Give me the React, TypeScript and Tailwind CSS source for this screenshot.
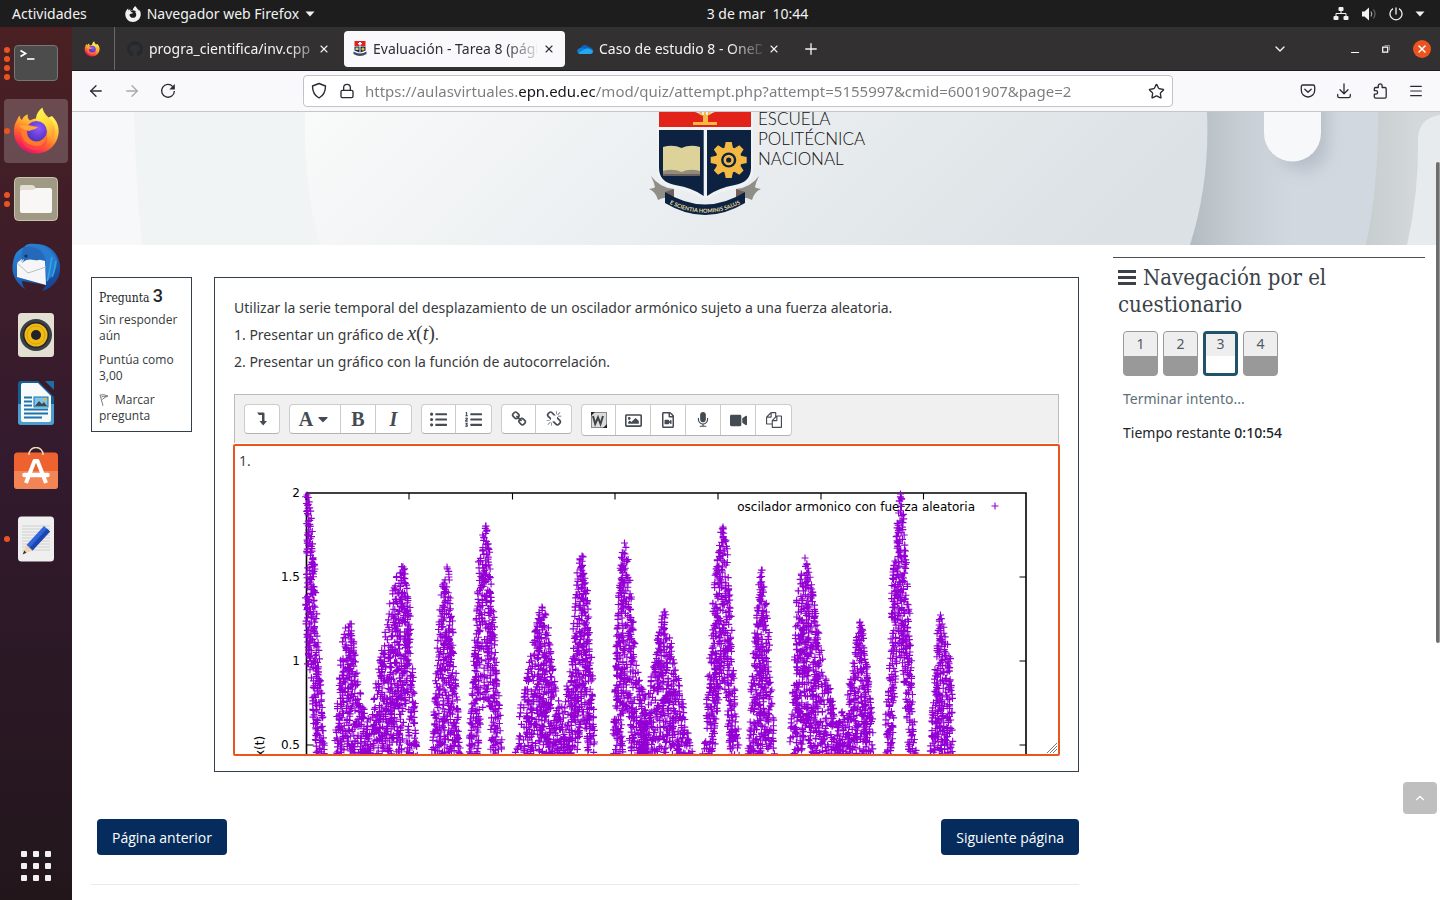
import React from "react";
import {
  ArrowLeft,
  ArrowRight,
  ChevronDown,
  ChevronUp,
  Lock,
  Menu,
  Plus,
  Star,
  X,
} from "lucide-react";
import { FaCaretDown, FaGithub, FaListOl, FaListUl, FaRegFileVideo, FaRegImage, FaVideo } from "react-icons/fa";
import { SiFirefoxbrowser } from "react-icons/si";

/* ---------- System icons ---------- */

function NetworkIcon() {
  return (
    <svg viewBox="0 0 16 14" className="h-3.5 w-4" fill="currentColor" aria-hidden="true">
      <rect x="5.500" y="0" width="5" height="4" rx="1" />
      <rect x="0.500" y="9" width="5" height="4" rx="1" />
      <rect x="10.500" y="9" width="5" height="4" rx="1" />
      <path d="M8 4v2.500M3 9V6.500h10V9" fill="none" stroke="currentColor" strokeWidth="1" />
    </svg>
  );
}

function VolumeIcon() {
  return (
    <svg viewBox="0 0 16 14" className="h-3.5 w-4" aria-hidden="true">
      <path d="M1 4.500h2.500L8 0.500v13L3.500 9.500H1z" fill="currentColor" />
      <path d="M10 4.500q1.500 2.500 0 5" fill="none" stroke="#aaa" strokeWidth="1.200" />
      <path d="M12.500 2.500q3 4.500 0 9" fill="none" stroke="#666" strokeWidth="1.200" />
    </svg>
  );
}

function PowerIcon() {
  return (
    <svg viewBox="0 0 14 14" className="size-3.5" fill="none" stroke="currentColor" strokeWidth="1.300" aria-hidden="true">
      <path d="M7 0.500v7M4 1.600a6 6 0 1 0 6 0" />
    </svg>
  );
}

function DownTriangle() {
  return (
    <svg viewBox="0 0 10 6" className="h-1.5 w-2.5" fill="currentColor" aria-hidden="true">
      <path d="M0.500 0.500h9L5 5.500z" />
    </svg>
  );
}

/* ---------- Application icons ---------- */

function FirefoxLogo({ className, id }: { className: string; id: string }) {
  return (
    <svg viewBox="0 0 48 48" className={className} aria-hidden="true">
      <defs>
        <linearGradient id={id + "body"} x1="0.85" y1="0.1" x2="0.3" y2="1">
          <stop offset="0" stopColor="#fff44f" />
          <stop offset="0.35" stopColor="#ffb02e" />
          <stop offset="0.6" stopColor="#ff6a2d" />
          <stop offset="0.85" stopColor="#f9284f" />
          <stop offset="1" stopColor="#d8147c" />
        </linearGradient>
        <linearGradient id={id + "flame"} x1="0.3" y1="0" x2="0.8" y2="1">
          <stop offset="0" stopColor="#fff44f" />
          <stop offset="0.6" stopColor="#ffd23a" />
          <stop offset="1" stopColor="#ff9640" />
        </linearGradient>
        <radialGradient id={id + "globe"} cx="0.6" cy="0.3" r="0.8">
          <stop offset="0" stopColor="#9059ff" />
          <stop offset="0.5" stopColor="#6b41d9" />
          <stop offset="1" stopColor="#4a2fae" />
        </radialGradient>
      </defs>
      <path
        d="M3 17C5 13 6 10.500 7.500 8.500C8 11 8.500 12 10 13C11 9.500 13.500 8 16 7.500C15 10 16 12.500 18.500 13.500C22 11 27 11 31 13L40 9C45 14 47.500 20 46.500 27C45 38 36 46.500 24.500 46.500C12 46.500 2 37 2 25C2 22 2.200 19 3 17Z"
        fill={`url(#${id}body)`}
      />
      <path
        d="M24 13C24 7 27 3 30.500 0.500C31 5 34 8 37 11C43 16 44.500 24 41 31C40 27 38 24 35 21C31 17 28 15 24 13Z"
        fill={`url(#${id}flame)`}
      />
      <circle cx="24.500" cy="24.500" r="10.500" fill={`url(#${id}globe)`} />
      <path
        d="M7 19C10 17 15 18 18 18.500L25 20C24 23 20 23 18 24C15 26 17 30 21 32C27 35 32 32 34 28C35 34 31 39 25 39C16 39 9 33 9 25C9 22 8 20 7 19Z"
        fill="#ff7a2c"
      />
      <path d="M9 25C9 33 16 39 25 39C31 39 35 34 34 28C37 34 34 43 24 43C12 43 8 33 9 25Z" fill="#ff4a45" opacity="0.700" />
      <circle cx="24.500" cy="25" r="9.500" fill={`url(#${id}globe)`} />
      <path d="M7 19C11 17 16 18 26 20C24 22.500 20 22.500 17.500 24C13 23 10 22 7 19Z" fill="#ffa436" />
    </svg>
  );
}

function TerminalIcon() {
  return (
    <svg viewBox="0 0 48 48" className="size-12" aria-hidden="true">
      <rect x="2.500" y="6.500" width="43" height="35" rx="3.500" fill="#4c4c4c" stroke="#777" />
      <path d="M8.500 11.500l5 3-5 3" fill="none" stroke="#fff" strokeWidth="1.800" />
      <path d="M15 20h7.500" stroke="#fff" strokeWidth="1.600" />
    </svg>
  );
}

function FilesIcon() {
  return (
    <svg viewBox="0 0 48 48" className="size-12" aria-hidden="true">
      <rect x="2.500" y="2.500" width="43" height="43" rx="4" fill="#a09a85" stroke="#c8c2b0" />
      <path d="M8 37V12q0-2 2-2h10q2 0 3 2l1.500 3H38v22z" fill="#e2ded3" />
      <path d="M8 16.500q0-1.500 2-1.500h11l3-2h14q2 0 2 2V36q0 2-2 2H10q-2 0-2-2z" fill="#f8f7f5" />
    </svg>
  );
}

function ThunderbirdIcon() {
  return (
    <svg viewBox="0 0 48 48" className="size-12" aria-hidden="true">
      <defs>
        <linearGradient id="tbird" x1="0.2" y1="0" x2="0.8" y2="1">
          <stop offset="0" stopColor="#2b86d6" />
          <stop offset="0.5" stopColor="#1f66bd" />
          <stop offset="1" stopColor="#173f8c" />
        </linearGradient>
      </defs>
      <path d="M3 12C1 17-1 26 2 33C4 38 8 43 13 46C11 43 10 40 10 38L34 42L30 48C42 45 49 34 48 23C47 10 37 1 24 1C16 0 14 2 12 4C8 6 5 8 3 12Z" fill="url(#tbird)" />
      <path d="M5 20L13 13L33 18L34 42L5 34Z" fill="#f6f6f8" />
      <path d="M5 20L16 30L34 24" fill="none" stroke="#b9bcc4" strokeWidth="1" />
      <path d="M19 1C26 3 31 8 33 14C35 21 33 30 35 38C41 33 45 26 45 17C40 7 30 0 19 1Z" fill="#2a7cd0" />
      <path d="M12 4C18 2 27 5 30 11C31 16 27 18 22 17C18 16 14 16 10 20C9 13 10 8 12 4Z" fill="#2569b8" />
      <path d="M35 38C38 30 38 22 40 14M40 34C43 28 43 22 44 18" stroke="#35a5e2" strokeWidth="1.500" fill="none" />
      <circle cx="14" cy="13" r="1.600" fill="#16305f" />
      <path d="M8 18l4-2-1 4z" fill="#c9cfd8" />
    </svg>
  );
}

function MusicIcon() {
  return (
    <svg viewBox="0 0 48 48" className="size-12" aria-hidden="true">
      <rect x="6" y="2" width="36" height="44" rx="3.500" fill="#e3dfd3" />
      <circle cx="24" cy="24" r="16" fill="#3b4047" />
      <circle cx="24" cy="24" r="13" fill="#22262b" />
      <circle cx="24" cy="24" r="11.500" fill="#f0b915" />
      <circle cx="24" cy="24" r="9" fill="none" stroke="#d29c08" strokeWidth="0.800" />
      <circle cx="24" cy="24" r="5" fill="#202327" />
    </svg>
  );
}

function WriterIcon() {
  return (
    <svg viewBox="0 0 48 48" className="size-12" aria-hidden="true">
      <path d="M9 2h17l16 16v25q0 3-3 3H9q-3 0-3-3V5q0-3 3-3z" fill="#15608f" />
      <path d="M6 25h36v18q0 3-3 3H9q-3 0-3-3z" fill="#4a9fce" />
      <path d="M33 2h9v9z" fill="#1b6fa2" />
      <path d="M11 4h15l13 13v24q0 2-2 2H11q-2 0-2-2V6q0-2 2-2z" fill="#f7f9fa" />
      <path d="M12 18.500h8M12 22.500h8M12 26.500h8M12 30.500h24M12 34.500h24M12 38.500h18" stroke="#1b75ab" strokeWidth="2" />
      <rect x="22" y="18" width="14" height="10" fill="#7cc4ea" stroke="#1b75ab" />
      <path d="M23 27l4-5 3 3 2-2 3 4z" fill="#3b4a52" />
      <circle cx="33" cy="20.500" r="1.500" fill="#f3b61f" />
    </svg>
  );
}

function SoftwareIcon() {
  return (
    <svg viewBox="0 0 48 48" className="size-12" aria-hidden="true">
      <rect x="2" y="5.500" width="44" height="36.500" rx="3.500" fill="#ee6230" />
      <path d="M2 24h44v14.500q0 3.500-3.500 3.500h-37Q2 42 2 38.500z" fill="#f28455" />
      <path d="M17 8V7.500a7 7 0 0 1 14 0V8" fill="none" stroke="#f6dcb6" strokeWidth="1.500" />
      <path d="M14 36L22.500 14h3L34 36" fill="none" stroke="#fff" strokeWidth="4" strokeLinejoin="round" />
      <path d="M12.500 28h23" stroke="#fff" strokeWidth="4.500" strokeLinecap="round" />
    </svg>
  );
}

function EditorIcon() {
  return (
    <svg viewBox="0 0 48 48" className="size-12" aria-hidden="true">
      <rect x="6" y="1.500" width="36" height="45" rx="3.500" fill="#efefef" />
      <path d="M10 11h28M10 14h28M10 17h28M10 20h28M10 23h28M10 26h28M10 29h28M10 32h28M10 35h28" stroke="#cfcfcf" strokeWidth="1" />
      <path d="M32 11l6 5.500L20.500 35.500l-6-5.500z" fill="#2f66dd" />
      <path d="M35 13.700l3 2.800L20.500 35.500l-3-2.800z" fill="#1c46ad" />
      <path d="M14.500 30l6 5.500-9.500 3.500z" fill="#f2d3a8" />
      <path d="M12.200 35.500l2.300 2.200-3.800 1.800z" fill="#333" />
    </svg>
  );
}

function OneDriveIcon() {
  return (
    <svg viewBox="0 0 16 12" className="h-3 w-4 shrink-0" aria-hidden="true">
      <path d="M3.500 5A5 5 0 0 1 12 4q4 .5 4 4l-8 2z" fill="#0a63bd" />
      <path d="M3 5q3-1 6 1.500l-6 4.500Q0 10 0 8t3-3z" fill="#0f7ad6" />
      <path d="M1 10L8 6q4-2 8 2 0 3-3 3H3q-1 0-2-1z" fill="#22a7f0" />
    </svg>
  );
}

function EpnFavicon() {
  return (
    <svg viewBox="0 0 14 16" className="h-4 w-3.5 shrink-0" aria-hidden="true">
      <path d="M1.500 0h11v5h-11z" fill="#dd2222" />
      <path d="M6.200 1h1.600v3.500H6.200zM5 2h4v1.200H5z" fill="#fff" />
      <path d="M1.500 5.500h5v6l-5-2zM7.500 5.500h5v4l-5 2z" fill="#10264a" />
      <path d="M2.500 6.500h3v2.500h-3z" fill="#d8cf8d" />
      <circle cx="10" cy="8" r="1.600" fill="#efb33c" />
      <path d="M0.500 10.500q6.500 4 13 0v2.500q-6.500 4-13 0z" fill="#3e4a5d" />
    </svg>
  );
}

/* ---------- Dock ---------- */

type DockItem = { name: string; icon: React.ReactNode; windows: number; active?: boolean };

const dockItems: DockItem[] = [
  { name: "Terminal", icon: <TerminalIcon />, windows: 4 },
  { name: "Firefox", icon: <FirefoxLogo className="size-12" id="dock" />, windows: 1, active: true },
  { name: "Archivos", icon: <FilesIcon />, windows: 2 },
  { name: "Thunderbird", icon: <ThunderbirdIcon />, windows: 0 },
  { name: "Rhythmbox", icon: <MusicIcon />, windows: 0 },
  { name: "LibreOffice Writer", icon: <WriterIcon />, windows: 0 },
  { name: "Ubuntu Software", icon: <SoftwareIcon />, windows: 0 },
  { name: "Editor de texto", icon: <EditorIcon />, windows: 1 },
];

function Dock() {
  return (
    <nav
      aria-label="Aplicaciones"
      className="flex w-[72px] shrink-0 flex-col items-center justify-between bg-gradient-to-b from-[#4a2022] via-[#331a2e] to-[#22161b] pt-1 pb-0.5"
    >
      <div className="flex flex-col gap-1">
        {dockItems.map((item) => (
          <button
            key={item.name}
            type="button"
            aria-label={item.name}
            className={
              item.active
                ? "relative flex size-16 items-center justify-center rounded bg-white/20"
                : "relative flex size-16 items-center justify-center rounded"
            }
          >
            {item.icon}
            <span className="absolute inset-y-0 left-0 flex flex-col justify-center gap-[3px]">
              {Array.from({ length: item.windows }, (_, i) => (
                <span key={i} className="size-1.5 rounded-full bg-[#e95420]" />
              ))}
            </span>
          </button>
        ))}
      </div>
      <button type="button" aria-label="Mostrar aplicaciones" className="flex size-16 items-center justify-center">
        <span className="grid grid-cols-3 gap-1.5">
          {Array.from({ length: 9 }, (_, i) => (
            <span key={i} className="size-1.5 rounded-[1px] bg-[#f2f1f0]" />
          ))}
        </span>
      </button>
    </nav>
  );
}

/* ---------- Browser chrome ---------- */

function TopBar() {
  return (
    <header className="grid h-[27px] shrink-0 grid-cols-[1fr_auto_1fr] items-center bg-[#1d1d1d] text-sm text-[#f2f2f2]">
      <div className="flex items-center gap-[38px] pl-3">
        <button type="button">Actividades</button>
        <button type="button" className="flex items-center gap-1.5">
          <SiFirefoxbrowser className="size-4" aria-hidden="true" />
          <span>Navegador web Firefox</span>
          <DownTriangle />
        </button>
      </div>
      <button type="button" className="pl-[75px] whitespace-pre">{"3 de mar  10:44"}</button>
      <div className="flex items-center justify-end gap-3 pr-[15px]">
        <NetworkIcon />
        <VolumeIcon />
        <PowerIcon />
        <DownTriangle />
      </div>
    </header>
  );
}

function TabTitle({ children, fade }: { children: React.ReactNode; fade?: boolean }) {
  return (
    <span
      className={
        fade
          ? "min-w-0 flex-1 text-left whitespace-nowrap [mask-image:linear-gradient(to_right,black_calc(100%-32px),rgb(0_0_0/0.15))]"
          : "min-w-0 flex-1 text-left whitespace-nowrap [mask-image:linear-gradient(to_right,black_calc(100%-24px),rgb(0_0_0/0.4))]"
      }
    >
      {children}
    </span>
  );
}

function TabBar() {
  return (
    <div className="flex h-11 shrink-0 items-center border-b border-[#1c1b22] bg-[#323031] text-sm text-[#f4f4f4]">
      <div className="flex h-full w-[43px] shrink-0 items-center justify-center border-r border-[#6a696a] pr-0.5">
        <FirefoxLogo className="size-4" id="pinned" />
      </div>
      <div className="ml-3 flex w-[203px] items-center gap-1.5">
        <FaGithub className="size-4 shrink-0 text-[#24292e]" aria-hidden="true" />
        <TabTitle>progra_cientifica/inv.cpp</TabTitle>
        <button type="button" aria-label="Cerrar pestaña"><X className="size-3" strokeWidth={2.2} /></button>
      </div>
      <div className="ml-3.5 flex h-9 w-[221px] items-center gap-1.5 rounded bg-[#f9f9fb] pr-2.5 pl-[9px] text-[#2e2e36]">
        <EpnFavicon />
        <TabTitle fade>Evaluación - Tarea 8 (pági</TabTitle>
        <button type="button" aria-label="Cerrar pestaña"><X className="size-3" strokeWidth={2.2} /></button>
      </div>
      <div className="ml-3 flex w-[203px] items-center gap-1.5">
        <OneDriveIcon />
        <TabTitle fade>Caso de estudio 8 - OneD</TabTitle>
        <button type="button" aria-label="Cerrar pestaña"><X className="size-3" strokeWidth={2.2} /></button>
      </div>
      <button type="button" aria-label="Nueva pestaña" className="ml-[22px]">
        <Plus className="size-[18px]" strokeWidth={1.8} />
      </button>
      <div className="ml-auto flex items-center pr-[9px]">
        <button type="button" aria-label="Listar pestañas" className="mr-[63px]">
          <ChevronDown className="size-4" strokeWidth={2} />
        </button>
        <div className="flex items-center gap-[23px]">
          <button type="button" aria-label="Minimizar" className="flex size-2 items-end">
            <span className="h-px w-2 bg-white" />
          </button>
          <button type="button" aria-label="Restaurar">
            <svg viewBox="0 0 8 8" className="size-2" fill="none" aria-hidden="true">
              <path d="M0.700 2.200h5v5h-5z" stroke="#fff" strokeWidth="1.200" />
              <path d="M2.500 0.500h5v5" stroke="#aaa" strokeWidth="0.800" />
            </svg>
          </button>
          <button type="button" aria-label="Cerrar" className="flex size-[18px] items-center justify-center rounded-full bg-[#e95420] text-white">
            <X className="size-3" strokeWidth={3} />
          </button>
        </div>
      </div>
    </div>
  );
}

function ReloadIcon() {
  return (
    <svg viewBox="0 0 16 16" className="size-4" fill="none" stroke="currentColor" strokeWidth="1.300" aria-hidden="true">
      <path d="M12.800 3.600A6.400 6.400 0 1 0 14.400 8" />
      <path d="M14.800 1v5.500H9.300z" fill="currentColor" stroke="none" />
    </svg>
  );
}

function ShieldIcon() {
  return (
    <svg viewBox="0 0 16 18" className="h-[18px] w-4 shrink-0" fill="none" stroke="currentColor" strokeWidth="1.400" strokeLinejoin="round" aria-hidden="true">
      <path d="M8 1.500L1.500 4q0 8.500 6.500 12 6.500-3.500 6.500-12z" />
    </svg>
  );
}

function PocketIcon() {
  return (
    <svg viewBox="0 0 16 16" className="size-4" fill="none" stroke="currentColor" strokeWidth="1.300" strokeLinecap="round" strokeLinejoin="round" aria-hidden="true">
      <path d="M3 2h10q1.700 0 1.700 1.700V7.300a6.700 6.700 0 0 1-13.400 0V3.700Q1.300 2 3 2z" />
      <path d="M4.800 6.300L8 9.300l3.200-3" />
    </svg>
  );
}

function DownloadIcon() {
  return (
    <svg viewBox="0 0 16 16" className="size-4" fill="none" stroke="currentColor" strokeWidth="1.300" strokeLinecap="round" strokeLinejoin="round" aria-hidden="true">
      <path d="M8 1v9.500M4 6.800L8 10.700l4-3.900M1.700 11.500V13q0 1.700 1.700 1.700h9.200q1.700 0 1.700-1.700v-1.500" />
    </svg>
  );
}

function PuzzleIcon() {
  return (
    <svg viewBox="0 0 16 16" className="size-4" fill="none" stroke="currentColor" strokeWidth="1.300" strokeLinejoin="round" aria-hidden="true">
      <path d="M6.300 4.500V2.800a1.900 1.900 0 0 1 3.800 0v1.700h2.700q1.400 0 1.400 1.400v7.800q0 1.400-1.400 1.400H3.700q-1.400 0-1.400-1.400v-2.500h1.500a1.800 1.800 0 0 0 0-3.600H2.300V5.900q0-1.400 1.400-1.400z" />
    </svg>
  );
}

function NavBar() {
  return (
    <div className="flex h-[41px] shrink-0 items-center border-b border-[#c6c6c6] bg-[#f9f9fb] pr-4 text-[#2b2a33]">
      <div className="flex items-center gap-[18px] pl-[15px]">
        <button type="button" aria-label="Atrás"><ArrowLeft className="size-[18px]" strokeWidth={1.7} /></button>
        <button type="button" aria-label="Adelante" className="text-[#a9a9ad]"><ArrowRight className="size-[18px]" strokeWidth={1.7} /></button>
        <button type="button" aria-label="Recargar" className="flex w-[18px] justify-center"><ReloadIcon /></button>
      </div>
      <div className="mr-auto ml-[126px] flex h-8 w-[870px] items-center rounded border border-[#c3c3c7] bg-white px-[7px]">
        <ShieldIcon />
        <Lock className="ml-3 size-4 shrink-0" strokeWidth={2} aria-hidden="true" />
        <input
          aria-label="Dirección"
          type="text"
          defaultValue="https://aulasvirtuales.epn.edu.ec/mod/quiz/attempt.php?attempt=5155997&cmid=6001907&page=2"
          className="ml-2.5 min-w-0 flex-1 bg-[linear-gradient(to_right,#7b7b80_154px,#15141a_154px,#15141a_231px,#7b7b80_231px)] bg-clip-text text-[15px] text-transparent caret-black outline-none"
        />
        <button type="button" aria-label="Añadir a marcadores"><Star className="size-[17px]" strokeWidth={1.9} /></button>
      </div>
      <div className="flex items-center gap-5">
        <button type="button" aria-label="Guardar en Pocket"><PocketIcon /></button>
        <button type="button" aria-label="Descargas"><DownloadIcon /></button>
        <button type="button" aria-label="Extensiones"><PuzzleIcon /></button>
        <button type="button" aria-label="Menú"><Menu className="size-4" strokeWidth={1.8} /></button>
      </div>
    </div>
  );
}

/* ---------- Banner ---------- */

function BannerArt() {
  return (
    <svg viewBox="0 0 1368 133" preserveAspectRatio="xMaxYMin slice" className="absolute inset-0 size-full" aria-hidden="true">
      <defs>
        <linearGradient id="bgdisc" x1="0" y1="0" x2="1" y2="0.15">
          <stop offset="0" stopColor="#f9fafa" />
          <stop offset="0.5" stopColor="#eaeef0" />
          <stop offset="1" stopColor="#dbe1e5" />
        </linearGradient>
        <linearGradient id="bgshade" gradientUnits="userSpaceOnUse" x1="1110" y1="0" x2="1220" y2="0">
          <stop offset="0" stopColor="#b0b8bf" />
          <stop offset="0.5" stopColor="#c6cdd2" />
          <stop offset="1" stopColor="#d2d8e0" />
        </linearGradient>
        <linearGradient id="bgshade2" gradientUnits="userSpaceOnUse" x1="1295" y1="0" x2="1345" y2="0">
          <stop offset="0" stopColor="#c8cdd0" />
          <stop offset="1" stopColor="#d3d8da" />
        </linearGradient>
        <filter id="soft" x="-50%" y="-50%" width="200%" height="200%">
          <feGaussianBlur stdDeviation="8" />
        </filter>
      </defs>
      <rect width="1368" height="133" fill="#f3f5f6" />
      <path d="M62 0Q64 70 70 133H0V0z" fill="#f6f8f9" />
      <path d="M233 0Q231 70 248 133H70Q64 70 62 0z" fill="#f1f4f5" />
      <rect x="1080" width="288" height="133" fill="url(#bgshade)" />
      <path d="M1306 0Q1307 70 1294 133H1368V0z" fill="url(#bgshade2)" />
      <path d="M1368 3Q1346 6 1346 28Q1347 80 1335 133H1368z" fill="#e7ebed" />
      <path d="M233 0Q231 70 248 133H1118Q1138 70 1135 0z" fill="url(#bgdisc)" />
      <path d="M1200-20h50v48a25 25 0 0 1-50 0z" fill="#8e99a4" opacity="0.400" filter="url(#soft)" transform="translate(6 6)" />
      <path d="M1192-20h57v41a28.500 28.500 0 0 1-57 0z" fill="#f6f8f9" />
    </svg>
  );
}

function Crest() {
  const teeth = [0, 45, 90, 135, 180, 225, 270, 315];
  return (
    <svg viewBox="0 0 114 104" className="h-[104px] w-[114px] shrink-0" role="img" aria-label="Escudo de la Escuela Politécnica Nacional">
      <path d="M9 0H105V60Q105 70 90 76Q70 80 57.300 88Q45 80 25 76Q9 70 9 60z" fill="#f0f3f4" />
      <rect x="11" width="92" height="15" fill="#e2231a" />
      <path d="M45 10h24v3H45zM55 3h5v8h-5zM49 0h16q-3 4-8 4t-8-4z" fill="#f4b942" />
      <path d="M47 0h4l2 2zM67 0h-4l-2 2zM54 0h2v3h-2zM58 0h2v3h-2z" fill="#e3ecf2" />
      <path d="M11 18H55.700V84Q45 76 27 73Q11 70 11 56z" fill="#0d2240" />
      <path d="M103 18H59V84Q70 76 87 73Q103 70 103 56z" fill="#0d2240" />
      <path d="M15 35Q25 32 33.500 36Q42 32 52 35V60Q42 57 33.500 61Q25 57 15 60z" fill="#ddd39a" />
      <path d="M15 59Q25 56 33.500 60Q42 56 52 59V63H15z" fill="#8f8c80" />
      <path d="M15 62h37v2H15z" fill="#6f615b" />
      <g transform="translate(80.700 48)" fill="#f4b942">
        {teeth.map((angle) => (
          <path key={angle} d="M-3-18h6l1.500 7h-9z" transform={`rotate(${angle})`} />
        ))}
        <circle r="13" />
        <circle r="7.600" fill="#0d2240" />
        <circle r="5.200" />
        <circle r="2.600" fill="#0d2240" />
      </g>
      <path d="M3 64Q12 76 26 77V87Q17 84 10 88Q8 80 1 77Q7 76 7 75Q6 70 3 64z" fill="#8f8f88" />
      <path d="M111 64Q102 76 88 77V87Q97 84 104 88Q106 80 113 77Q107 76 107 75Q108 70 111 64z" fill="#8f8f88" />
      <path d="M17 80l9-3v9zM97 80l-9-3v9z" fill="#6f5f5b" />
      <path d="M17 80Q57 105 97 80V91Q57 115 17 91z" fill="#0d2240" />
      <path id="motto" d="M19 90.500Q57 111 95 90.500" fill="none" />
      <text fill="#e6dca0" fontSize="5.6" fontWeight="700" fontFamily="Lato, sans-serif">
        <textPath href="#motto" startOffset="50%" textAnchor="middle">E SCIENTIA HOMINIS SALUS</textPath>
      </text>
    </svg>
  );
}

function Banner() {
  return (
    <div className="relative h-[133px] shrink-0 overflow-hidden">
      <BannerArt />
      <div className="relative flex items-start justify-center pl-[144px] text-[#0f0c0d]">
        <Crest />
        <p className="-mt-[3px] -ml-1 w-[250px] font-[Lato] text-[17px] leading-5 font-light">
          ESCUELA
          <br />
          POLITÉCNICA
          <br />
          NACIONAL
        </p>
      </div>
    </div>
  );
}

/* ---------- Chart ---------- */

type Lobe = { outer: number[][]; hole?: number[][] };

// Each row is [y, left, right] in the coordinates of the chart.
const lobes: Lobe[] = [
  { outer: [[495, 306, 308], [515, 306, 311], [547, 307, 313], [577, 306, 315], [610, 306, 317], [660, 307, 319], [672, 308, 319], [687, 312, 321], [713, 313, 322], [756, 316, 325]] },
  { outer: [[624, 349, 351], [630, 344, 352], [645, 342, 354], [660, 341, 356], [680, 339, 358], [700, 338, 361], [720, 337, 367], [756, 334, 368]] },
  { outer: [[567, 402, 404], [575, 397, 405], [590, 393, 407], [610, 389, 410], [640, 384, 411], [660, 380, 412], [680, 377, 413], [705, 372, 415], [720, 368, 416], [756, 364, 418]], hole: [[703, 405, 406], [715, 404, 408], [756, 402, 406]] },
  { outer: [[567, 446, 448], [580, 444, 449], [596, 441, 450], [617, 440, 452], [640, 438, 453], [660, 436, 455], [700, 435, 457], [730, 433, 459], [756, 432, 461]] },
  { outer: [[526, 485, 487], [540, 482, 488], [560, 479, 490], [590, 478, 491], [620, 476, 494], [650, 474, 495], [680, 473, 497], [700, 472, 499], [730, 470, 501], [756, 469, 502]], hole: [[700, 484, 487], [720, 481, 490], [756, 479, 491]] },
  { outer: [[607, 541, 543], [620, 537, 547], [640, 533, 550], [660, 530, 552], [690, 525, 557], [705, 521, 562], [756, 515, 566]] },
  { outer: [[556, 581, 583], [565, 578, 584], [590, 576, 587], [610, 575, 588], [640, 573, 590], [670, 570, 592], [700, 565, 593], [756, 562, 595]], hole: [[722, 582, 584], [740, 579, 586], [756, 577, 587]] },
  { outer: [[543, 624, 625], [560, 621, 628], [590, 619, 631], [620, 618, 633], [650, 616, 636], [680, 616, 639], [695, 615, 645], [756, 612, 648]], hole: [[708, 625, 627], [725, 623, 629], [756, 623, 630]] },
  { outer: [[612, 663, 665], [630, 659, 669], [650, 656, 672], [670, 653, 677], [690, 649, 680], [705, 646, 683], [720, 642, 686], [756, 636, 694]] },
  { outer: [[527, 722, 724], [550, 718, 727], [580, 715, 728], [600, 713, 730], [640, 712, 732], [665, 709, 733], [690, 707, 735], [710, 705, 737], [730, 703, 738], [756, 701, 740]], hole: [[685, 722, 724], [700, 719, 725], [730, 717, 728], [756, 716, 730]] },
  { outer: [[570, 761, 762], [585, 759, 764], [610, 756, 767], [630, 755, 769], [660, 752, 770], [700, 751, 772], [730, 750, 774], [756, 748, 775]] },
  { outer: [[558, 804, 806], [575, 801, 810], [600, 797, 814], [625, 796, 817], [640, 795, 820], [670, 795, 824], [690, 793, 830], [710, 791, 834], [720, 791, 840], [756, 790, 840]], hole: [[728, 805, 807], [756, 801, 810]] },
  { outer: [[622, 859, 861], [635, 857, 865], [655, 853, 866], [680, 850, 868], [700, 846, 870], [715, 839, 872], [756, 838, 873]] },
  { outer: [[494, 900, 901], [515, 898, 904], [545, 896, 905], [580, 892, 907], [620, 892, 910], [645, 891, 910], [670, 889, 912], [700, 887, 913], [756, 884, 916]], hole: [[658, 899, 901], [670, 896, 903], [700, 895, 905], [756, 892, 908]] },
  { outer: [[615, 940, 941], [630, 938, 945], [645, 936, 948], [665, 935, 951], [690, 934, 952], [720, 932, 953], [756, 930, 953]] },
];

function seeded(seed: number) {
  let state = seed;
  return () => {
    state = (state * 1664525 + 1013904223) % 4294967296;
    return state / 4294967296;
  };
}

function spanAt(rows: number[][], y: number): [number, number] | null {
  for (let i = 1; i < rows.length; i++) {
    const a = rows[i - 1];
    const b = rows[i];
    if (y >= a[0] && y <= b[0]) {
      const t = (y - a[0]) / (b[0] - a[0]);
      return [a[1] + (b[1] - a[1]) * t, a[2] + (b[2] - a[2]) * t];
    }
  }
  return null;
}

function buildMarkers() {
  const random = seeded(20230303);
  const parts: string[] = [];
  const add = (x: number, y: number) => parts.push(`M${(x - 3.5).toFixed(1)} ${y.toFixed(1)}h7m-3.500-3.500v7`);
  for (const lobe of lobes) {
    const [top, topLeft, topRight] = lobe.outer[0];
    add((topLeft + topRight) / 2, top);
    for (let y = top; y < 756; y += 1) {
      const span = spanAt(lobe.outer, y);
      if (!span) continue;
      const left = span[0] - 0.5;
      const width = span[1] - span[0] + 1;
      const hole = lobe.hole ? spanAt(lobe.hole, y) : null;
      const count = Math.floor(width / 11 + 0.15 + random());
      for (let k = 0; k < count; k++) {
        const x = left + width * random();
        if (hole && x > hole[0] && x < hole[1]) continue;
        add(x, y + random() * 2 - 0.5);
      }
    }
  }
  return parts.join("");
}

const markers = buildMarkers();

function OscillatorChart() {
  return (
    <svg viewBox="239 477 820 280" className="block h-[280px] w-[820px] max-w-none" role="img" aria-label="Serie temporal x(t)">
      <path d="M306.500 760V493H1026V760" fill="none" stroke="#000" strokeWidth="1.600" />
      <path
        d="M409 493v6.500M512.500 493v6.500M615 493v6.500M718 493v6.500M821 493v6.500M923.500 493v6.500M307 577h6.500M307 661h6.500M307 745h6.500M1026 577h-6.500M1026 661h-6.500M1026 745h-6.500"
        stroke="#000"
        strokeWidth="1.100"
      />
      <g fontFamily="DejaVu Sans, sans-serif" fontSize="12" fill="#000">
        <text x="300" y="497" textAnchor="end">2</text>
        <text x="300" y="581" textAnchor="end">1.5</text>
        <text x="300" y="665" textAnchor="end">1</text>
        <text x="300" y="749" textAnchor="end">0.5</text>
        <text x="975" y="511" textAnchor="end">oscilador armonico con fuerza aleatoria</text>
        <text transform="translate(264 757) rotate(-90)">x(t)</text>
      </g>
      <path d={markers} stroke="#9400d3" strokeWidth="1.150" fill="none" />
      <path d="M991.500 506h7m-3.500-3.500v7" stroke="#9400d3" strokeWidth="1.100" />
    </svg>
  );
}

/* ---------- Rich text editor ---------- */

function Glyph({ d, viewBox = "0 0 1792 1792" }: { d: string; viewBox?: string }) {
  return (
    <svg viewBox={viewBox} className="h-4 w-4" fill="currentColor" aria-hidden="true">
      <path d={d} />
    </svg>
  );
}

const linkPath =
  "M1520 1216q0-40-28-68l-208-208q-28-28-68-28-42 0-72 32 3 3 19 18.500t21.500 21.500 15 19 13 25.500 3.500 27.500q0 40-28 68t-68 28q-15 0-27.500-3.500t-25.500-13-19-15-21.500-21.500-18.500-19q-33 31-33 73 0 40 28 68l206 207q27 27 68 27 40 0 68-26l147-146q28-28 28-67zm-703-705q0-40-28-68l-206-207q-28-28-68-28-39 0-68 27l-147 146q-28 28-28 67 0 40 28 68l208 208q27 27 68 27 42 0 72-31-3-3-19-18.500t-21.500-21.500-15-19-13-25.500-3.500-27.500q0-40 28-68t68-28q15 0 27.500 3.500t25.500 13 19 15 21.500 21.500 18.500 19q33-31 33-73zm895 705q0 120-85 203l-147 146q-83 83-203 83-121 0-204-85l-206-207q-83-83-83-203 0-123 88-209l-88-88q-86 88-208 88-120 0-204-84l-208-208q-84-84-84-204t85-203l147-146q83-83 203-83 121 0 204 85l206 207q83 83 83 203 0 123-88 209l88 88q86-88 208-88 120 0 204 84l208 208q84 84 84 204z";
const unlinkPath =
  "M503 1271l-256 256q-10 9-23 9-12 0-23-9-9-10-9-23t9-23l256-256q10-9 23-9t23 9q9 10 9 23t-9 23zm169 41v320q0 14-9 23t-23 9-23-9-9-23v-320q0-14 9-23t23-9 23 9 9 23zm-224-224q0 14-9 23t-23 9h-320q-14 0-23-9t-9-23 9-23 23-9h320q14 0 23 9t9 23zm1264 128q0 120-85 203l-147 146q-83 83-203 83-121 0-204-85l-334-335q-21-21-42-56l239-18 273 274q28 28 68 27.500t68-27.500l147-146q28-28 28-67 0-40-28-68l-274-275 18-239q35 21 56 42l336 336q84 86 84 204zm-617-724l-239 18-273-274q-28-28-68-28-39 0-68 27l-147 146q-28 28-28 67 0 40 28 68l274 274-18 240q-35-21-56-42l-336-336q-84-86-84-204 0-120 85-203l147-146q83-83 203-83 121 0 204 85l334 335q21 21 42 56zm633 84q0 14-9 23t-23 9h-320q-14 0-23-9t-9-23 9-23 23-9h320q14 0 23 9t9 23zm-544-544v320q0 14-9 23t-23 9-23-9-9-23v-320q0-14 9-23t23-9 23 9 9 23zm407 151l-256 256q-11 9-23 9t-23-9q-9-10-9-23t9-23l256-256q10-9 23-9t23 9q9 10 9 23t-9 23z";
const micPath =
  "M1344 704v128q0 221-147.500 384.500t-364.500 187.500v132h256q26 0 45 19t19 45-19 45-45 19h-640q-26 0-45-19t-19-45 19-45 45-19h256v-132q-217-24-364.500-187.500t-147.500-384.500v-128q0-26 19-45t45-19 45 19 19 45v128q0 185 131.500 316.500t316.500 131.500 316.500-131.500 131.500-316.500v-128q0-26 19-45t45-19 45 19 19 45zm-256-384v512q0 132-94 226t-226 94-226-94-94-226v-512q0-132 94-226t226-94 226 94 94 226z";
const filesPath =
  "M1696 384q40 0 68 28t28 68v1216q0 40-28 68t-68 28h-960q-40 0-68-28t-28-68v-288h-544q-40 0-68-28t-28-68v-672q0-40 20-88t48-76l408-408q28-28 76-48t88-20h416q40 0 68 28t28 68v328q68-40 128-40h416zm-544 213l-299 299h299v-299zm-640-384l-299 299h299v-299zm196 647l316-316v-416h-384v416q0 40-28 68t-68 28h-416v640h512v-256q0-40 20-88t48-76zm956 804v-1152h-384v416q0 40-28 68t-68 28h-416v640h896z";

function WordIcon() {
  return (
    <svg viewBox="0 0 16 16" className="size-4" aria-hidden="true">
      <rect x="0.500" y="0.500" width="15" height="15" fill="#dcdcdc" stroke="#888" />
      <path d="M0 0h4L0 4zM12 16h4v-4z" fill="#222" />
      <path d="M2 4l2.200 8L7 5.500 9.500 12 12 4" fill="none" stroke="#3f4447" strokeWidth="2" />
    </svg>
  );
}

type Tool = { label: string; icon: React.ReactNode; wide?: boolean };

const toolGroups: Tool[][] = [
  [
    {
      label: "Mostrar más botones",
      icon: (
        <svg viewBox="0 0 12 14" className="h-3.5 w-3" fill="currentColor" aria-hidden="true">
          <path d="M1 0.500h6.500q1 0 1 1V9H11L7.200 13.500 3.500 9H6V3H3z" />
        </svg>
      ),
    },
  ],
  [
    {
      label: "Estilos de párrafo",
      wide: true,
      icon: (
        <>
          <span className="font-['Liberation_Serif'] text-xl leading-none font-bold">A</span>
          <FaCaretDown className="size-4" aria-hidden="true" />
        </>
      ),
    },
    { label: "Negrita", icon: <span className="font-['Liberation_Serif'] text-xl leading-none font-bold">B</span> },
    { label: "Cursiva", icon: <span className="font-['Liberation_Serif'] text-xl leading-none font-bold italic">I</span> },
  ],
  [
    { label: "Lista desordenada", icon: <FaListUl className="size-[17px]" /> },
    { label: "Lista ordenada", icon: <FaListOl className="size-[17px]" /> },
  ],
  [
    { label: "Enlace", icon: <Glyph d={linkPath} /> },
    { label: "Quitar enlace", icon: <Glyph d={unlinkPath} /> },
  ],
  [
    { label: "Importar Word", icon: <WordIcon /> },
    { label: "Insertar imagen", icon: <FaRegImage className="size-[17px]" /> },
    { label: "Insertar archivo multimedia", icon: <FaRegFileVideo className="size-4" /> },
    { label: "Grabar audio", icon: <Glyph d={micPath} viewBox="0 0 1536 1792" /> },
    { label: "Grabar vídeo", icon: <FaVideo className="size-[17px]" /> },
    { label: "Gestionar archivos", icon: <Glyph d={filesPath} /> },
  ],
];

function toolClass(tool: Tool, tall: boolean) {
  if (tool.wide) return "flex h-7 w-[51px] items-center justify-center gap-0.5";
  if (tall) return "flex h-[30px] w-[35px] items-center justify-center first:w-[34px]";
  return "flex h-7 w-[35px] items-center justify-center first:w-[34px]";
}

function EditorToolbar() {
  return (
    <div role="toolbar" aria-label="Editor" className="mb-px flex h-[49px] items-start gap-[9px] border border-b-0 border-[#bbb] bg-[#f0f0f0] px-[9px] pt-[9px]">
      {toolGroups.map((group, index) => (
        <div
          key={index}
          className="flex divide-x divide-[#ccc] overflow-hidden rounded border border-[#ccc] border-b-[#b3b3b3] bg-white text-[#454b52]"
        >
          {group.map((tool) => (
            <button key={tool.label} type="button" aria-label={tool.label} className={toolClass(tool, group.length > 3)}>
              {tool.icon}
            </button>
          ))}
        </div>
      ))}
    </div>
  );
}

/* ---------- Quiz page ---------- */

function QuestionInfo() {
  return (
    <section className="w-[101px] shrink-0 border border-[#343f49] px-[7px] pt-[9px] pb-[7px] text-xs leading-4 text-[#373a3c]">
      <h3 className="mb-[5px] font-['DejaVu_Serif_Condensed'] text-xs leading-[18px] text-[#212529]">
        Pregunta <span className="font-[Roboto] text-lg leading-[18px] font-medium">3</span>
      </h3>
      <p className="mb-2">Sin responder aún</p>
      <p className="mb-2">Puntúa como 3,00</p>
      <a href="#marcar" className="block">
        <svg viewBox="0 0 10 12" className="mr-1.5 mb-0.5 inline-block h-3 w-2.5" fill="none" stroke="#6b6f73" strokeWidth="0.900" aria-hidden="true">
          <path d="M1 0.800l3 11M1.200 1q4-1 7.800 1-3 1-5.800 3.500M2.500 3q2-1 5-0.500" />
        </svg>
        Marcar pregunta
      </a>
    </section>
  );
}

function Question() {
  return (
    <section className="min-w-0 flex-1 border border-[#343f49] px-[19px] pt-4 pb-[15px]">
      <div className="font-['Noto_Sans'] text-sm leading-[27px] text-[#373a3c]">
        <p>Utilizar la serie temporal del desplazamiento de un oscilador armónico sujeto a una fuerza aleatoria.</p>
        <p>
          1. Presentar un gráfico de{" "}
          <span className="font-['Liberation_Serif'] text-xl leading-none">
            <i>x</i>(<i>t</i>)
          </span>
          .
        </p>
        <p>2. Presentar un gráfico con la función de autocorrelación.</p>
      </div>
      <div className="mt-[19px]">
        <EditorToolbar />
        <div className="relative -mx-px">
          <div
            contentEditable
            suppressContentEditableWarning
            role="textbox"
            aria-multiline="true"
            aria-label="Respuesta"
            className="h-[312px] overflow-hidden rounded-[2px] border-2 border-[#e95420] bg-white px-1 pt-[3px] text-sm leading-6 text-[#373a3c] outline-none"
          >
            <p className="mb-1">1.</p>
            <OscillatorChart />
          </div>
          <svg viewBox="0 0 12 12" className="absolute right-0.5 bottom-0.5 size-3" stroke="#777" strokeWidth="1" aria-hidden="true">
            <path d="M1 11L11 1M4 11L11 4M7 11l4-4" />
          </svg>
        </div>
      </div>
    </section>
  );
}

const questions = [1, 2, 3, 4];

function QuizNavigation() {
  return (
    <aside className="w-[312px] shrink-0 border-t border-[#4a4f54] text-[#373a3c]">
      <h2 className="px-[5px] pt-1.5 font-['DejaVu_Serif_Condensed'] text-[22px] leading-[27px] text-[#3a4248]">
        <svg viewBox="0 0 18 15" className="mr-[7px] mb-1 inline-block h-[15px] w-[18px]" fill="currentColor" aria-hidden="true">
          <path d="M0 0h18v3H0zM0 6h18v3H0zM0 12h18v3H0z" />
        </svg>
        Navegación por el cuestionario
      </h2>
      <div className="px-2.5 pt-[13px] font-['Noto_Sans'] text-sm">
        <nav aria-label="Preguntas" className="flex gap-[5px]">
          {questions.map((n) => (
            <a
              key={n}
              href={"#q" + n}
              className={
                n === 3
                  ? "flex h-[45px] w-[35px] flex-col overflow-hidden rounded border-[3px] border-[#1f536b] bg-white text-center text-[#4f5b66]"
                  : "flex h-[45px] w-[35px] flex-col overflow-hidden rounded border border-[#999] bg-[#999] text-center text-[#4f5b66]"
              }
            >
              <span className={n === 3 ? "h-[22px] bg-[#eee] leading-5" : "h-6 bg-[#eee] leading-6"}>{n}</span>
            </a>
          ))}
        </nav>
        <a href="#terminar" className="mt-[13px] block leading-5 text-[#5d6f77]">Terminar intento...</a>
        <p className="mt-3.5 leading-5 text-[#212529]">
          Tiempo restante <span className="font-medium">0:10:54</span>
        </p>
      </div>
    </aside>
  );
}

function QuizPage() {
  return (
    <div className="relative min-h-0 flex-1 overflow-hidden bg-white font-['Open_Sans',sans-serif]">
      <Banner />
      <div className="flex gap-[34px] pt-3 pr-[15px] pl-[19px]">
        <main className="min-w-0 flex-1 pt-5">
          <div className="flex items-start gap-[22px]">
            <QuestionInfo />
            <Question />
          </div>
          <div className="mt-[47px] flex justify-between pl-1.5 text-sm text-white">
            <button type="button" className="h-9 rounded bg-[#052c5c] px-[15px] pt-px">Página anterior</button>
            <button type="button" className="h-9 rounded bg-[#052c5c] px-[15px] pt-px">Siguiente página</button>
          </div>
          <hr className="mt-[29px] border-[#ebebeb]" />
        </main>
        <QuizNavigation />
      </div>
      <button
        type="button"
        aria-label="Volver arriba"
        className="absolute right-[3px] bottom-[86px] flex h-8 w-[34px] items-center justify-center rounded bg-[#bfbfbf] text-white"
      >
        <ChevronUp className="size-3.5" strokeWidth={2} />
      </button>
      <div className="absolute top-[50px] right-0 h-[481px] w-1 rounded-full border-r border-[#999] bg-[#6d6d6d]" />
    </div>
  );
}

export default function App() {
  return (
    <div className="flex h-screen flex-col overflow-hidden font-['Noto_Sans',sans-serif]">
      <TopBar />
      <div className="flex min-h-0 flex-1">
        <Dock />
        <div className="flex min-w-0 flex-1 flex-col">
          <TabBar />
          <NavBar />
          <QuizPage />
        </div>
      </div>
    </div>
  );
}
